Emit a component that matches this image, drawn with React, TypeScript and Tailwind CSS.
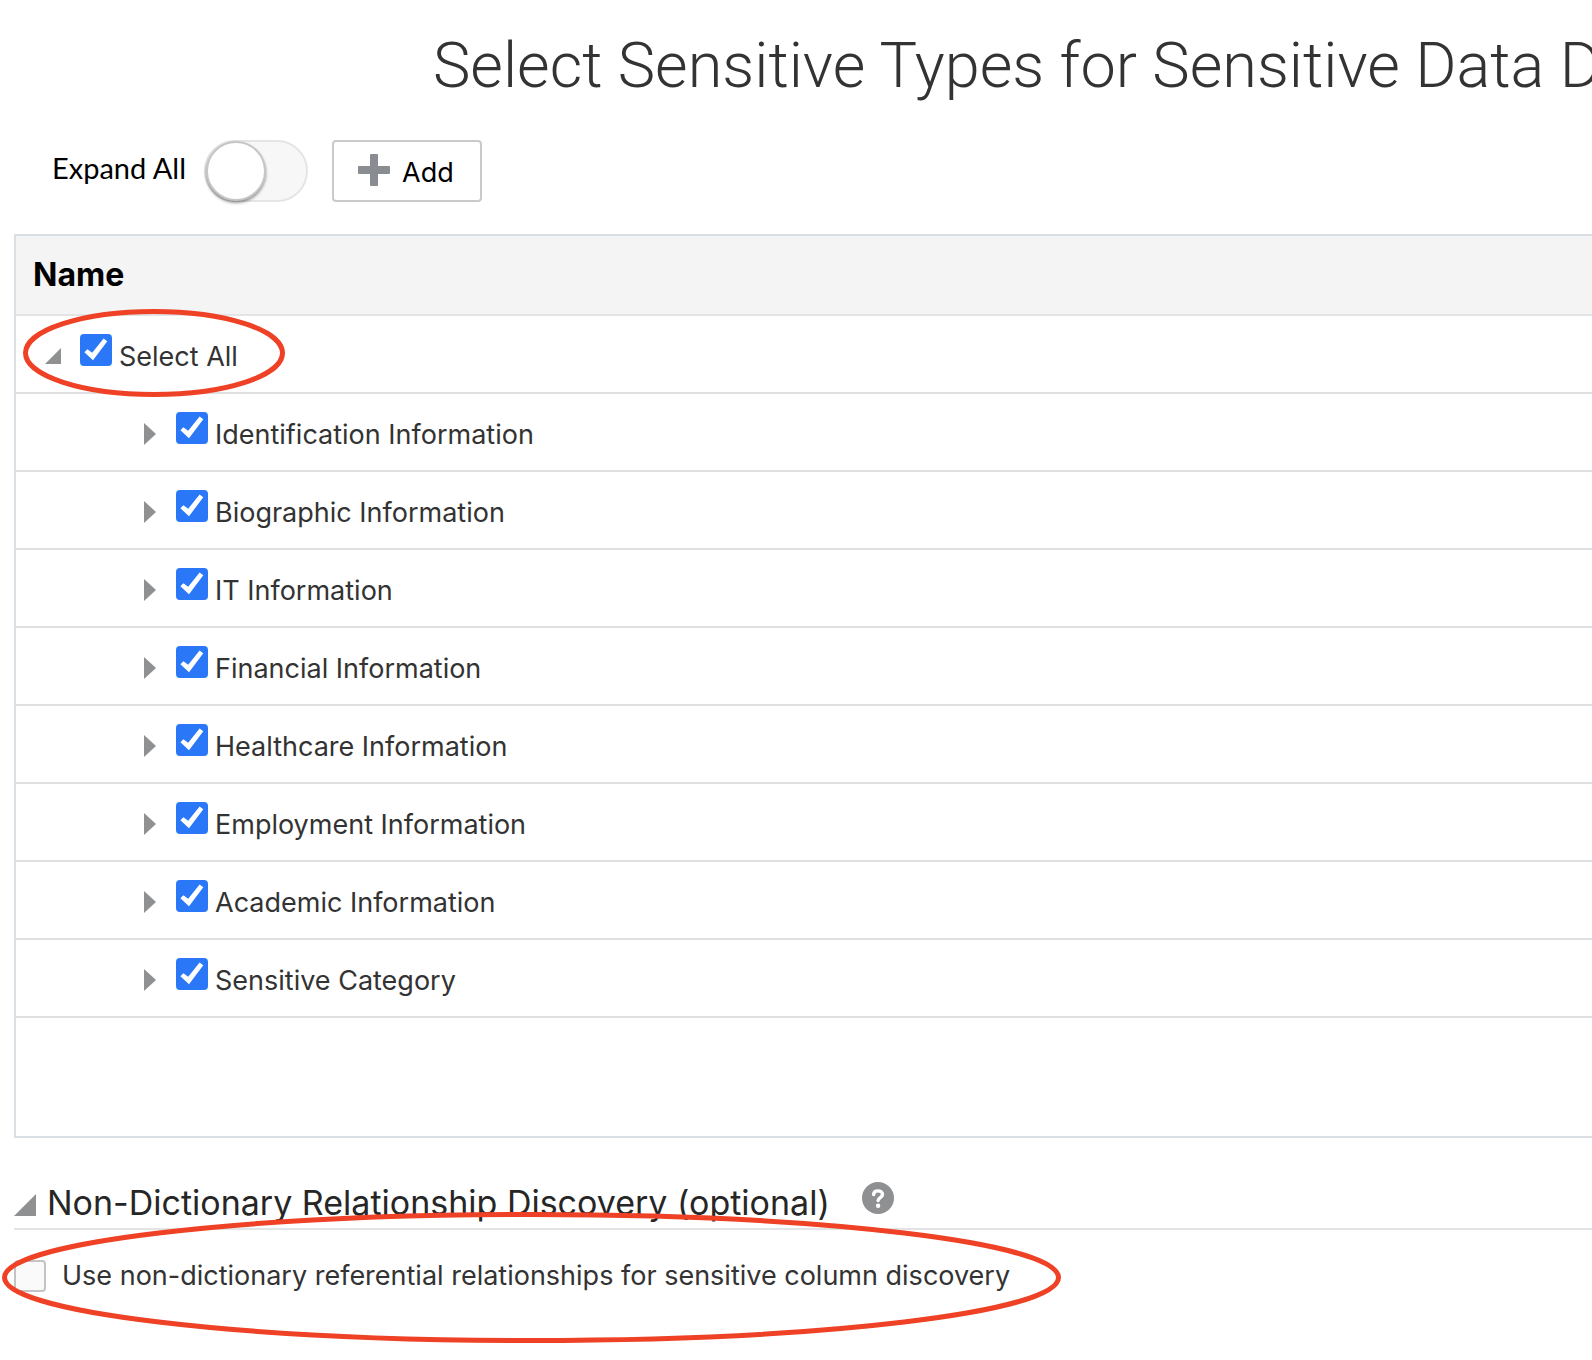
import React, { useState } from "react";

const categories = [
  "Identification Information",
  "Biographic Information",
  "IT Information",
  "Financial Information",
  "Healthcare Information",
  "Employment Information",
  "Academic Information",
  "Sensitive Category",
];

function CheckBox({ id, checked, onChange }: { id: string; checked: boolean; onChange: () => void }) {
  return (
    <span className="relative block size-8 shrink-0">
      <input
        id={id}
        type="checkbox"
        checked={checked}
        onChange={onChange}
        className="block size-8 appearance-none rounded-[4px] border-2 border-[#c4c4c4] bg-[#fafafa] checked:border-[#2a78f8] checked:bg-[#2a78f8]"
      />
      {checked && (
        <svg viewBox="0 0 32 32" className="pointer-events-none absolute inset-0 size-8" aria-hidden="true">
          <path d="M4.4 18.2l3-3 4.8 3.6L23.6 4.6l3.7 2.6L13 26.2z" fill="#fff" />
        </svg>
      )}
    </span>
  );
}

function Annotation({ className, w, h }: { className: string; w: number; h: number }) {
  return (
    <svg viewBox={`0 0 ${w} ${h}`} className={className} aria-hidden="true">
      <ellipse cx={w / 2} cy={h / 2} rx={w / 2 - 2.5} ry={h / 2 - 2.5} fill="none" stroke="#ee4125" strokeWidth="5" />
    </svg>
  );
}

export default function App() {
  const [expandAll, setExpandAll] = useState(false);
  const [checked, setChecked] = useState(categories.map(() => true));
  const [useNonDict, setUseNonDict] = useState(false);
  const all = checked.every(Boolean);

  return (
    <main className="min-h-screen overflow-hidden bg-white font-['Inter',sans-serif] text-[27px] leading-8 text-[#333]">
      <h1 className="pt-[26px] pl-[433px] font-['Roboto',sans-serif] text-[63px] leading-[80px] font-light whitespace-nowrap">
        Select Sensitive Types for Sensitive Data D
      </h1>

      <div className="mt-[34px] flex h-[62px] items-center pl-[52px]">
        <label htmlFor="expand" className="pb-1.5 font-['Lato',sans-serif] text-[29px] text-black">
          Expand All
        </label>
        <button
          id="expand"
          type="button"
          role="switch"
          aria-checked={expandAll}
          onClick={() => setExpandAll(!expandAll)}
          className="ml-[18px] flex h-[62px] w-[104px] items-center rounded-full border-2 border-[#e4e5e6] bg-[#f7f7f7]"
        >
          <span className="block size-[60px] rounded-full border-2 border-[#c5c6c7] bg-white shadow-[0_2px_3px_rgba(0,0,0,0.4)]" />
        </button>
        <button
          type="button"
          className="ml-6 flex h-[62px] w-[150px] items-center gap-3 rounded-[4px] border-2 border-[#c9cacb] pl-6 text-black"
        >
          <svg viewBox="0 0 32 32" className="mb-0.5 size-8" aria-hidden="true">
            <path d="M13 0h6q1 0 1 1v11h11q1 0 1 1v6q0 1-1 1H20v11q0 1-1 1h-6q-1 0-1-1V20H1q-1 0-1-1v-6q0-1 1-1h11V1q0-1 1-1z" fill="#898c91" />
          </svg>
          <span className="pt-1">Add</span>
        </button>
      </div>

      <div className="relative mt-8 ml-[14px] border-2 border-r-0 border-[#dadfe3] pb-[118px]">
        <table className="w-full border-separate border-spacing-0">
          <thead>
            <tr>
              <th scope="col" className="h-20 border-b-2 border-[#e3e4e5] bg-[#f4f4f4] p-0 pl-[17px] text-left text-[32px] leading-10 font-bold text-black">
                Name
              </th>
            </tr>
          </thead>
          <tbody>
            <tr>
              <td className="h-[78px] border-b-2 border-[#dfe0e1] p-0">
                <div className="flex items-center pl-[29px]">
                  <button type="button" aria-label="Collapse all" className="mt-1">
                    <svg viewBox="0 0 16 16" className="size-4"><path d="M16 0v16H0z" fill="#8f9092" /></svg>
                  </button>
                  <span className="ml-[19px] pb-2">
                    <CheckBox id="all" checked={all} onChange={() => setChecked(checked.map(() => !all))} />
                  </span>
                  <label htmlFor="all" className="ml-[7px] pt-1.5">Select All</label>
                </div>
              </td>
            </tr>
            {categories.map((name, i) => (
              <tr key={name}>
                <td className="h-[78px] border-b-2 border-[#dfe0e1] p-0">
                  <div className="flex items-center pl-32">
                    <button type="button" aria-label={`Expand ${name}`} className="mt-1">
                      <svg viewBox="0 0 12 22" className="h-[22px] w-3"><path d="M0 0l12 11L0 22z" fill="#8f9092" /></svg>
                    </button>
                    <span className="ml-5 pb-2">
                      <CheckBox
                        id={`c${i}`}
                        checked={checked[i]}
                        onChange={() => setChecked(checked.map((v, k) => (k === i ? !v : v)))}
                      />
                    </span>
                    <label htmlFor={`c${i}`} className="ml-[7px] pt-1.5">{name}</label>
                  </div>
                </td>
              </tr>
            ))}
          </tbody>
        </table>
        <Annotation w={262} h={88} className="pointer-events-none absolute top-[73px] left-[7px] h-[88px] w-[262px]" />
      </div>

      <section className="relative mt-10 ml-[14px]">
        <div className="flex h-[52px] items-center border-b-2 border-[#e3e4e5]">
          <button type="button" aria-label="Collapse section" className="mt-1">
            <svg viewBox="0 0 22 22" className="size-[22px]"><path d="M22 0v22H0z" fill="#8f9092" /></svg>
          </button>
          <h2 className="ml-[11px] text-[34px] leading-10 whitespace-nowrap text-[#262626]">
            Non-Dictionary Relationship Discovery (optional)
          </h2>
          <button type="button" aria-label="Help" className="mb-2.5 ml-8">
            <svg viewBox="0 0 32 32" className="size-8">
              <circle cx="16" cy="16" r="16" fill="#8f9092" />
              <path d="M11.6 12.6c.1-2.4 1.9-3.7 4.4-3.7s4.5 1.4 4.5 3.7c0 3-4.4 3.2-4.4 6" fill="none" stroke="#fff" strokeWidth="3.4" strokeLinecap="round" />
              <circle cx="16.1" cy="23.8" r="2.2" fill="#fff" />
            </svg>
          </button>
        </div>
        <div className="flex items-center pt-[30px]">
          <CheckBox id="nondict" checked={useNonDict} onChange={() => setUseNonDict(!useNonDict)} />
          <label htmlFor="nondict" className="ml-4 whitespace-nowrap">
            Use non-dictionary referential relationships for sensitive column discovery
          </label>
        </div>
        <Annotation w={1059} h={131} className="pointer-events-none absolute top-[34px] left-[-12px] h-[131px] w-[1059px]" />
      </section>
    </main>
  );
}
